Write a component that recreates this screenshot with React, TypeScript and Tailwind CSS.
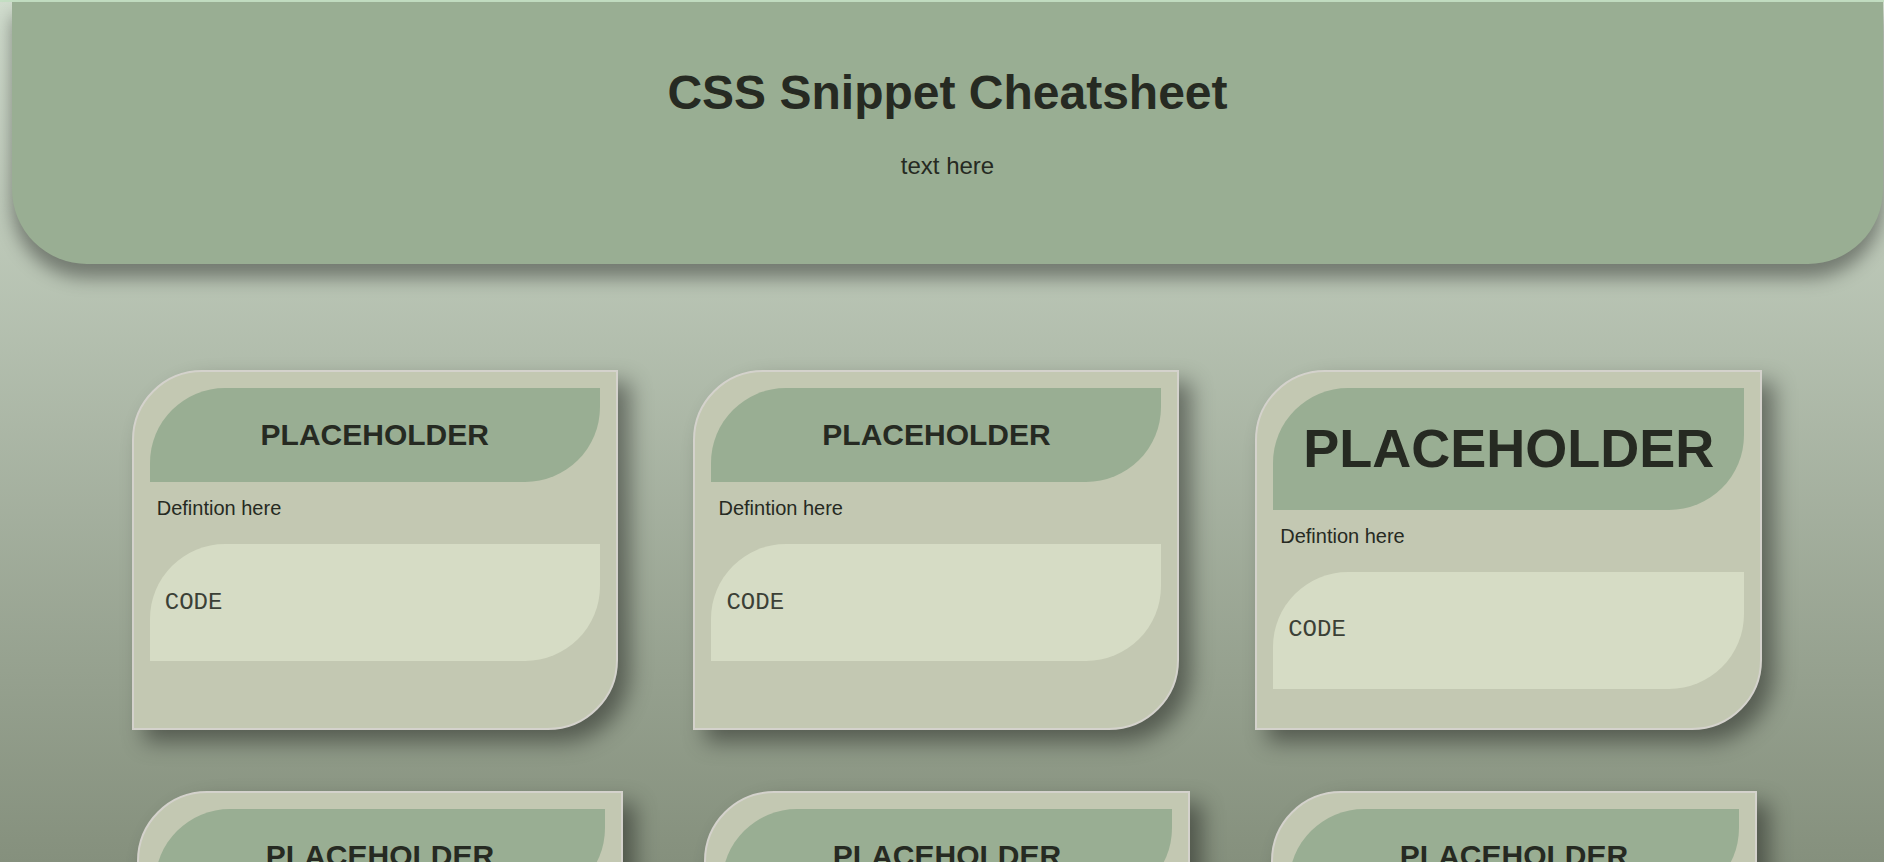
type Snippet = {
  id: number;
  title: string;
  definition: string;
  code: string;
  large?: boolean;
};

const snippets: Snippet[] = [
  { id: 1, title: "PLACEHOLDER", definition: "Defintion here", code: "CODE" },
  { id: 2, title: "PLACEHOLDER", definition: "Defintion here", code: "CODE" },
  { id: 3, title: "PLACEHOLDER", definition: "Defintion here", code: "CODE", large: true },
  { id: 4, title: "PLACEHOLDER", definition: "Defintion here", code: "CODE" },
  { id: 5, title: "PLACEHOLDER", definition: "Defintion here", code: "CODE" },
  { id: 6, title: "PLACEHOLDER", definition: "Defintion here", code: "CODE" },
];

function SnippetCard({ snippet }: { snippet: Snippet }) {
  return (
    <article className="flex shrink-0 basis-[486px] flex-col rounded-tl-[70px] rounded-br-[70px] border-2 border-[#d4d2cc] bg-[#c3c8b2] p-[16px] shadow-[12px_12px_22px_rgba(0,0,0,0.42)]">
      <h2
        className={`rounded-tl-[75px] rounded-br-[75px] bg-[#99ae93] p-[30px] text-center font-bold leading-[1.14] ${
          snippet.large ? "text-[54px]" : "text-[30px]"
        }`}
      >
        {snippet.title}
      </h2>
      <p className="mt-[15px] px-[7px] text-[20px] leading-[23px]">
        {snippet.definition}
      </p>
      <div className="mt-[24px] mb-[23px] flex h-[117px] items-center rounded-tl-[75px] rounded-br-[75px] bg-[#d6dcc5] px-[15px]">
        <code className="font-['Liberation_Mono','Courier_New',monospace] text-[24px] text-[#3b4036]">
          {snippet.code}
        </code>
      </div>
    </article>
  );
}

export default function App() {
  return (
    <div className="min-h-screen bg-[linear-gradient(to_bottom,#d1ddce_0px,#85907d_862px)] font-['Liberation_Sans',Arial,sans-serif] text-[#262a22]">
      <div className="h-[2px] bg-[#c4dfc3]" aria-hidden />
      <header className="ml-[12px] mr-[1px] h-[262px] rounded-b-[75px] bg-[#99ae93] pt-[63px] text-center shadow-[0_14px_18px_rgba(0,0,0,0.38)]">
        <h1 className="text-[48px] font-bold leading-[56px]">
          CSS Snippet Cheatsheet
        </h1>
        <p className="mt-[31px] text-[24px] leading-[28px]">text here</p>
      </header>

      <main className="mt-[106px] flex flex-wrap justify-evenly gap-y-[61px] pr-[46px] pb-[40px] pl-[56px]">
        {snippets.map((snippet) => (
          <SnippetCard key={snippet.id} snippet={snippet} />
        ))}
      </main>
    </div>
  );
}
